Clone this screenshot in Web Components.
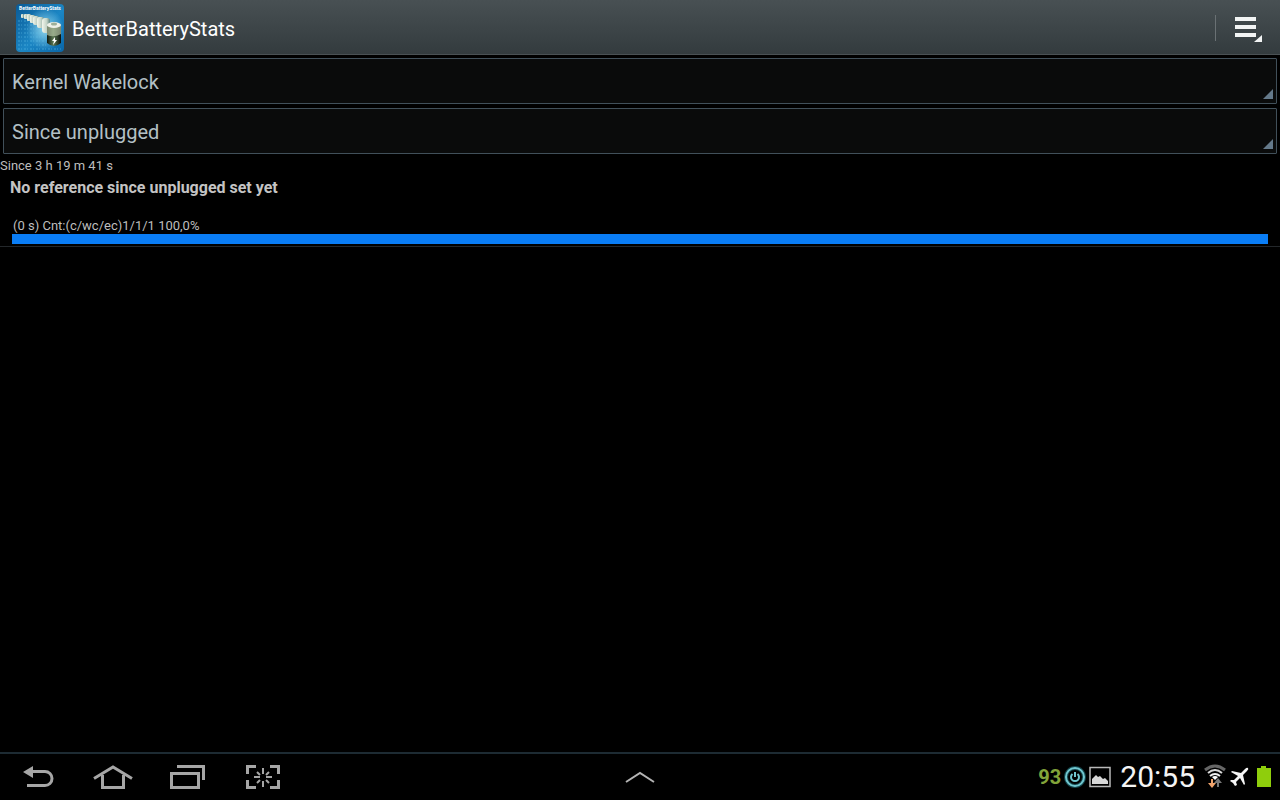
<!DOCTYPE html>
<html lang="en">
<head>
<meta charset="utf-8">
<meta name="viewport" content="width=device-width, initial-scale=1">
<title>BetterBatteryStats</title>
<style>
  html, body { height: 100%; margin: 0; background: #000; }
  body { font-family: Roboto, "Liberation Sans", sans-serif; color: #bebebe; }
</style>
</head>
<body>
<stats-app></stats-app>

<script>
class ActionBar extends HTMLElement {
  constructor() {
    super();
    this.attachShadow({ mode: 'open' });
  }

  connectedCallback() {
    this.shadowRoot.innerHTML = `
      <style>
        :host {
          display: flex;
          align-items: center;
          box-sizing: border-box;
          height: 55px;
          padding: 2px 16px 0;
          background: linear-gradient(#485053, #333b3e);
          border-bottom: 1px solid #4a5154;
        }
        .logo { flex: none; }
        h1 {
          flex: 1;
          margin: 0 0 0 8px;
          padding-top: 2px;
          font-size: 20px;
          line-height: 24px;
          font-weight: 400;
          color: #fff;
        }
        button {
          display: flex;
          align-items: center;
          height: 26px;
          padding: 0 0 0 18px;
          border: 0;
          border-left: 1px solid #6a7174;
          background: none;
          cursor: pointer;
        }
      </style>
      <svg class="logo" width="48" height="48" viewBox="0 0 48 48" aria-hidden="true">
        <defs>
          <linearGradient id="sky" x1="0" y1="0" x2="1" y2="1">
            <stop offset="0" stop-color="#0a5a96"/>
            <stop offset=".55" stop-color="#1b86c4"/>
            <stop offset="1" stop-color="#0966a8"/>
          </linearGradient>
          <radialGradient id="glow">
            <stop offset="0" stop-color="#9bdcf0" stop-opacity=".9"/>
            <stop offset="1" stop-color="#9bdcf0" stop-opacity="0"/>
          </radialGradient>
          <linearGradient id="can">
            <stop offset="0" stop-color="#10180f"/>
            <stop offset=".45" stop-color="#5c7954"/>
            <stop offset="1" stop-color="#0b110d"/>
          </linearGradient>
          <linearGradient id="cell">
            <stop offset="0" stop-color="#f2f6ec"/>
            <stop offset=".6" stop-color="#c3d3c6"/>
            <stop offset="1" stop-color="#5d8580"/>
          </linearGradient>
        </defs>
        <rect width="48" height="48" rx="4" fill="url(#sky)"/>
        <ellipse cx="29" cy="25" rx="19" ry="21" fill="url(#glow)"/>
        <path d="M2 17H14M2 21H18M2 25H22M2 29H25M2 33H27M2 37H28M2 41H30M2 45H45"
          stroke="#61bfe8" stroke-width="1" stroke-dasharray="2 1 1 2" opacity=".55"/>
        <g fill="url(#cell)">
          <rect x="5" y="10" width="3" height="4" rx="1"/>
          <rect x="8" y="10" width="4" height="5" rx="1"/>
          <rect x="11" y="10" width="4" height="7" rx="1"/>
          <rect x="14" y="11" width="5" height="8" rx="1"/>
          <rect x="17" y="12" width="6" height="9" rx="2"/>
          <rect x="21" y="13" width="7" height="11" rx="2"/>
          <rect x="26" y="14" width="8" height="15" rx="3"/>
        </g>
        <path d="M31 22V39Q38 45 45 39V22Z" fill="url(#can)"/>
        <path d="M31 22V31Q38 34 45 30V22Z" fill="#b9c7a7" opacity=".65"/>
        <ellipse cx="38" cy="21" rx="7" ry="3" fill="#eef1e8"/>
        <ellipse cx="38" cy="20" rx="3" ry="1.500" fill="#9daf98"/>
        <path d="M39 33L36 37H38L37 41L41 36H39Z" fill="#fff"/>
        <text x="24" y="6" text-anchor="middle" font-family="Roboto" font-weight="700" font-size="5" fill="#fff">BetterBatteryStats</text>
      </svg>
      <h1><slot></slot></h1>
      <button type="button" aria-label="Menu">
        <svg width="30" height="28" viewBox="0 0 30 28">
          <path d="M1 3H22V7H1ZM1 11H22V15H1ZM1 19H22V23H1Z" fill="#f2f4f4"/>
          <path d="M29 20V29H20Z" fill="#3a4245"/>
          <path d="M28 21V28H20Z" fill="#f2f4f4"/>
        </svg>
      </button>
    `;
  }
}

class HoloSpinner extends HTMLElement {
  constructor() {
    super();
    this.attachShadow({ mode: 'open' });
  }

  connectedCallback() {
    const label = this.getAttribute('label');
    this.shadowRoot.innerHTML = `
      <style>
        :host { display: block; position: relative; }
        select {
          display: block;
          appearance: none;
          box-sizing: border-box;
          width: 100%;
          height: 46px;
          margin: 0;
          padding: 2px 32px 0 8px;
          border: 1px solid #41505a;
          border-radius: 1px;
          background: #0a0b0b;
          color: #b3c0c5;
          font-family: inherit;
          font-size: 20px;
        }
        svg {
          position: absolute;
          right: 4px;
          bottom: 5px;
          pointer-events: none;
        }
      </style>
      <select aria-label="${label}"></select>
      <svg width="10" height="10" viewBox="0 0 10 10"><path d="M10 0V10H0Z" fill="#64798a"/></svg>
    `;
    const option = document.createElement('option');
    option.textContent = this.getAttribute('value');
    this.shadowRoot.querySelector('select').append(option);
  }
}

class StatRow extends HTMLElement {
  constructor() {
    super();
    this.attachShadow({ mode: 'open' });
  }

  connectedCallback() {
    this.shadowRoot.innerHTML = `
      <style>
        :host {
          display: block;
          padding: 4px 12px 2px;
          border-bottom: 1px solid #23272a;
        }
        h2 {
          margin: 0 -2px;
          font-size: 16px;
          line-height: 20px;
          font-weight: 700;
          color: #c4c4c4;
        }
        p {
          margin: 20px 1px 0;
          font-size: 13px;
          line-height: 16px;
        }
        .bar { height: 10px; background: #0a7df5; }
      </style>
      <h2><slot name="name"></slot></h2>
      <p><slot></slot></p>
      <div class="bar"></div>
    `;
  }
}

class SystemBar extends HTMLElement {
  constructor() {
    super();
    this.attachShadow({ mode: 'open' });
  }

  connectedCallback() {
    this.shadowRoot.innerHTML = `
      <style>
        :host {
          display: grid;
          grid-template-columns: 1fr auto 1fr;
          align-items: center;
          box-sizing: border-box;
          height: 48px;
          border-top: 2px solid #1d2b33;
          background: #000;
        }
        nav { display: flex; }
        button {
          display: flex;
          align-items: center;
          justify-content: center;
          width: 75px;
          height: 46px;
          padding: 0;
          border: 0;
          background: none;
          cursor: pointer;
        }
        .status {
          display: flex;
          align-items: center;
          justify-content: flex-end;
          gap: 3px;
          padding-right: 8px;
        }
        .percent {
          font-size: 20px;
          line-height: 28px;
          font-weight: 700;
          color: #82a43a;
        }
        time {
          margin: 0 6px;
          font-size: 30px;
          line-height: 32px;
          color: #f4f4f4;
        }
      </style>
      <nav>
        <button type="button" aria-label="Back">
          <svg width="36" height="28" viewBox="0 0 36 28">
            <path d="M3 9L13 3V7H25A8.500 8.500 0 0 1 25 24H7V21H25A5.500 5.500 0 0 0 25 10H13V15Z" fill="#a6a6a6"/>
          </svg>
        </button>
        <button type="button" aria-label="Home">
          <svg width="40" height="28" viewBox="0 0 40 28" fill="none" stroke="#a6a6a6" stroke-width="3">
            <path d="M1 15.500L20 4L39 15.500M9.500 12V24.500H30.500V12"/>
          </svg>
        </button>
        <button type="button" aria-label="Recent apps">
          <svg width="36" height="28" viewBox="0 0 36 28" fill="none" stroke="#a6a6a6" stroke-width="3">
            <path d="M7 3.500H33.500V17"/><rect x="1.500" y="10.500" width="27" height="14"/>
          </svg>
        </button>
        <button type="button" aria-label="Screenshot">
          <svg width="34" height="28" viewBox="0 0 34 28" fill="none" stroke="#a6a6a6">
            <path d="M10 3.500H1.500V11M24 3.500H32.500V11M10 24.500H1.500V17M24 24.500H32.500V17" stroke-width="3"/>
            <path d="M17 5V11M17 18V24M8 14H14M20 14H26M11 9L14 12M23 9L20 12M11 20L14 17M23 20L20 17" stroke-width="2"/>
          </svg>
        </button>
      </nav>
      <button type="button" aria-label="Show mini apps">
        <svg width="30" height="14" viewBox="0 0 30 14" fill="none" stroke="#b4b4b4" stroke-width="2">
          <path d="M1 12L15 3L29 12"/>
        </svg>
      </button>
      <div class="status">
        <span class="percent">93</span>
        <svg width="22" height="22" viewBox="0 0 22 22" fill="none">
          <circle cx="11" cy="11" r="9" stroke="#1f6f7a" stroke-width="4" opacity=".6"/>
          <circle cx="11" cy="11" r="9" stroke="#71c6cf" stroke-width="2"/>
          <path d="M8.500 8A4 4 0 1 0 13.500 8M11 6V11" stroke="#71c6cf" stroke-width="2"/>
        </svg>
        <svg width="22" height="22" viewBox="0 0 22 22">
          <rect x="1" y="1.500" width="20" height="19" fill="none" stroke="#b9b9b9" stroke-width="1.500"/>
          <path d="M3 18V13L7 9L9 11L11 10L14 13L16 12L19 15V18Z" fill="#d8d8d8"/>
        </svg>
        <time>20:55</time>
        <svg width="22" height="26" viewBox="0 0 22 26" fill="none">
          <path d="M1 6Q11 -2 21 6" stroke="#666" stroke-width="3"/>
          <path d="M4 9Q11 3 18 9" stroke="#d8d8d8" stroke-width="2"/>
          <path d="M6 12Q11 8 16 12" stroke="#f0f0f0" stroke-width="2"/>
          <path d="M8 13Q11 11 14 13L11 16Z" fill="#fff"/>
          <path d="M8 15V21" stroke="#f0a36c" stroke-width="2"/>
          <path d="M4 19H12L8 24Z" fill="#f0a36c"/>
          <path d="M14 17V23" stroke="#777" stroke-width="2"/>
          <path d="M10 19H18L14 14Z" fill="#777"/>
        </svg>
        <svg width="22" height="24" viewBox="0 0 22 24">
          <path d="M19 3Q20 4 18 6L14 10L16 19L15 20L11 13L7 17L8 20L6 21L4 18L1 16L2 15L5 15L9 11L2 7L3 6L12 8L16 4Q18 2 19 3Z" fill="#f6f6f6"/>
        </svg>
        <svg width="18" height="24" viewBox="0 0 18 24">
          <path d="M7 1H12V3H17V22H3V3H7Z" fill="#8fce0c"/>
        </svg>
      </div>
    `;
  }
}

class StatsApp extends HTMLElement {
  constructor() {
    super();
    this.attachShadow({ mode: 'open' });
  }

  connectedCallback() {
    this.shadowRoot.innerHTML = `
      <style>
        :host {
          display: flex;
          flex-direction: column;
          min-height: 100vh;
        }
        main { flex: 1; }
        .filters {
          display: grid;
          gap: 4px;
          padding: 3px 3px 4px;
        }
        .since {
          margin: 0;
          font-size: 13px;
          line-height: 16px;
        }
      </style>
      <action-bar>BetterBatteryStats</action-bar>
      <main>
        <div class="filters">
          <holo-spinner label="Statistic" value="Kernel Wakelock"></holo-spinner>
          <holo-spinner label="Reference" value="Since unplugged"></holo-spinner>
        </div>
        <p class="since">Since 3 h 19 m 41 s</p>
        <stat-row>
          <span slot="name">No reference since unplugged set yet</span>
          (0 s) Cnt:(c/wc/ec)1/1/1 100,0%
        </stat-row>
      </main>
      <system-bar></system-bar>
    `;
  }
}

customElements.define('action-bar', ActionBar);
customElements.define('holo-spinner', HoloSpinner);
customElements.define('stat-row', StatRow);
customElements.define('system-bar', SystemBar);
customElements.define('stats-app', StatsApp);
</script>
</body>
</html>
